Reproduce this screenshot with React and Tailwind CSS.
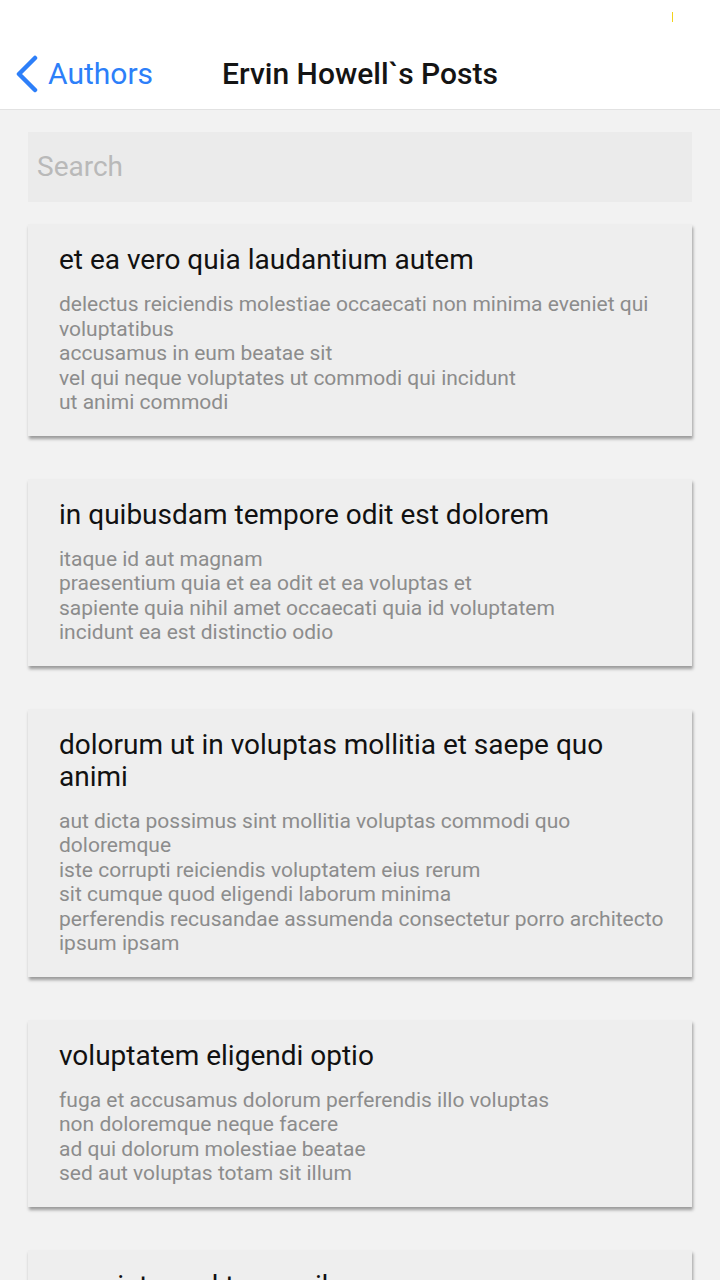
const posts = [
  {
    id: 11,
    title: "et ea vero quia laudantium autem",
    body: "delectus reiciendis molestiae occaecati non minima eveniet qui voluptatibus\naccusamus in eum beatae sit\nvel qui neque voluptates ut commodi qui incidunt\nut animi commodi",
  },
  {
    id: 12,
    title: "in quibusdam tempore odit est dolorem",
    body: "itaque id aut magnam\npraesentium quia et ea odit et ea voluptas et\nsapiente quia nihil amet occaecati quia id voluptatem\nincidunt ea est distinctio odio",
  },
  {
    id: 13,
    title: "dolorum ut in voluptas mollitia et saepe quo animi",
    body: "aut dicta possimus sint mollitia voluptas commodi quo doloremque\niste corrupti reiciendis voluptatem eius rerum\nsit cumque quod eligendi laborum minima\nperferendis recusandae assumenda consectetur porro architecto ipsum ipsam",
  },
  {
    id: 14,
    title: "voluptatem eligendi optio",
    body: "fuga et accusamus dolorum perferendis illo voluptas\nnon doloremque neque facere\nad qui dolorum molestiae beatae\nsed aut voluptas totam sit illum",
  },
  {
    id: 15,
    title: "eveniet quod temporibus",
    body: "reprehenderit quos placeat\nvelit minima officia dolores impedit repudiandae molestiae nam\nvoluptas recusandae quis delectus\nofficiis harum fugiat vitae",
  },
];

function PostCard({ post }) {
  return (
    <div className="bg-[#eeeeee] pt-[20px] pb-[21px] pl-[31px] pr-[23px] shadow-[1px_3px_3px_rgba(0,0,0,0.36)]">
      <h2 className="text-[28px] leading-[32px] text-[#111111]">{post.title}</h2>
      <p className="mt-[16px] text-[21px] leading-[24.5px] text-[#8c8c8c] whitespace-pre-line">
        {post.body}
      </p>
    </div>
  );
}

export default function App() {
  return (
    <div className="h-[1280px] overflow-hidden bg-[#f2f2f2] font-['Roboto',sans-serif]">
      {/* status bar + nav */}
      <div className="bg-white border-b border-[#e2e2e2]">
        <div className="h-[40px] flex justify-end pr-[47px] pt-[12px]">
          <div className="w-px h-[10px] bg-[#f2d21b]" />
        </div>
        <div className="h-[69px] grid grid-cols-[1fr_auto_1fr] items-center pb-[2px]">
          <div className="flex items-center pl-[15px]">
            <svg width="24" height="38" viewBox="0 0 24 38" fill="none">
              <path d="M20 3 L4 19 L20 35" stroke="#2d7ff9" strokeWidth="4.5" strokeLinecap="round" strokeLinejoin="round" />
            </svg>
            <span className="ml-[9px] text-[30px] text-[#2d7ff9]">Authors</span>
          </div>
          <h1 className="text-[30px] font-medium text-[#141414]">Ervin Howell`s Posts</h1>
          <div />
        </div>
      </div>

      <div className="px-[28px] pt-[22px]">
        <div className="h-[70px] bg-[#ebebeb] flex items-center pl-[9px]">
          <input
            placeholder="Search"
            className="w-full bg-transparent outline-none text-[28px] text-[#333] placeholder:text-[#b9b9b9]"
          />
        </div>

        <div className="mt-[22px] flex flex-col gap-[43px]">
          {posts.map((post) => (
            <PostCard key={post.id} post={post} />
          ))}
        </div>
      </div>
    </div>
  );
}
